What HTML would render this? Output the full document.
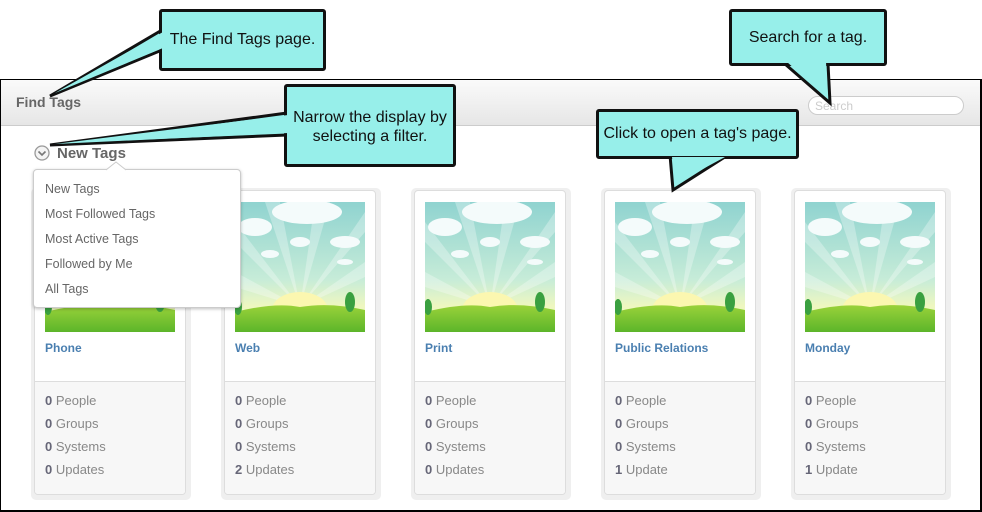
<!DOCTYPE html>
<html><head><meta charset="utf-8"><style>
body{margin:0;width:982px;height:511px;background:#fff;position:relative;overflow:hidden;font-family:"Liberation Sans",Arial,sans-serif}
.frame{position:absolute;left:0;top:79px;width:979px;height:430px;border:1px solid #000;border-right-width:2px;border-bottom-width:2px}
.hdr{position:absolute;left:0;top:0;right:0;height:45px;background:linear-gradient(#fafafa,#e6e6e6);border-bottom:1px solid #ccc}
.hdr b{position:absolute;left:15px;top:14px;font-size:14px;color:#666}
.search{position:absolute;left:807px;top:16px;width:156px;height:19px;border:1px solid #ccc;border-radius:10px;background:#fff;font-size:12px;color:#ccc;line-height:18px;padding-left:6px;box-sizing:border-box}
.card{position:absolute;top:188px;width:160px;height:312px;background:#efefef;border-radius:5px}
.in{position:absolute;left:3px;top:2px;width:152px;height:305px;background:#fff;border:1px solid #ddd;border-radius:4px;overflow:hidden;box-sizing:border-box}
.in svg{position:absolute;left:10px;top:11px}
.t{position:absolute;left:10px;top:150px;font-size:12px;font-weight:bold;color:#4a7fb0}
.st{position:absolute;left:0;top:190px;width:152px;height:120px;background:#f7f7f7;border-top:1px solid #ddd}
.st div{position:absolute;left:10px;font-size:13px;color:#888}
.st b{color:#667}
.co{position:absolute;background:#97efea;border:3px solid #111;border-radius:3px;box-sizing:border-box;font-size:16px;color:#111;text-align:center}
.dd{position:absolute;left:33px;top:169px;width:206px;height:137px;background:#fff;border:1px solid #ccc;border-radius:4px;box-shadow:0 1px 3px rgba(0,0,0,.25)}
.dd div{position:absolute;left:11px;font-size:12.5px;color:#666}
</style></head><body>
<svg width="0" height="0" style="position:absolute"><defs>
<linearGradient id="sky" x1="0" y1="0" x2="0" y2="1"><stop offset="0" stop-color="#8fd3d0"/><stop offset=".6" stop-color="#c7ecd8"/><stop offset=".8" stop-color="#eef7c0"/></linearGradient>
<linearGradient id="gr" x1="0" y1="0" x2="0" y2="1"><stop offset="0" stop-color="#9ad23a"/><stop offset="1" stop-color="#5cb52a"/></linearGradient>
<symbol id="pic" viewBox="0 0 130 130">
<rect width="130" height="130" fill="url(#sky)"/>
<g fill="#fff" opacity=".3"><path d="M65 105 L0 20 L0 40Z"/><path d="M65 105 L30 0 L45 0Z"/><path d="M65 105 L80 0 L95 0Z"/><path d="M65 105 L130 10 L130 30Z"/><path d="M65 105 L0 70 L0 85Z"/><path d="M65 105 L130 60 L130 75Z"/></g>
<g fill="#f4fbfb"><ellipse cx="72" cy="10" rx="35" ry="12"/><ellipse cx="20" cy="25" rx="17" ry="9"/><ellipse cx="110" cy="40" rx="15" ry="6"/><ellipse cx="65" cy="40" rx="10" ry="5"/><ellipse cx="35" cy="52" rx="9" ry="4"/><ellipse cx="110" cy="60" rx="8" ry="3"/></g>
<ellipse cx="65" cy="108" rx="28" ry="18" fill="#fbf7b0"/>
<path d="M0 110 Q40 100 65 105 Q95 100 130 108 L130 130 L0 130Z" fill="url(#gr)"/>
<ellipse cx="115" cy="100" rx="5" ry="10" fill="#3aa040"/><ellipse cx="3" cy="105" rx="4" ry="8" fill="#3aa040"/>
</symbol></defs></svg>

<div class="frame"><div class="hdr"><b>Find Tags</b><div class="search">Search</div></div></div>

<svg style="position:absolute;left:34px;top:145px" width="16" height="16"><circle cx="8" cy="8" r="7" fill="#f4f4f4" stroke="#999" stroke-width="1.3"/><path d="M4.5 6.5 L8 10 L11.5 6.5" fill="none" stroke="#777" stroke-width="1.6"/></svg>
<div style="position:absolute;left:57px;top:145px;font-size:15px;font-weight:bold;color:#666">New Tags</div>

<div class="card" style="left:31px"><div class="in"><svg width="130" height="130"><use href="#pic"/></svg><div class="t">Phone</div><div class="st"><div style="top:11px"><b>0</b> People</div><div style="top:34px"><b>0</b> Groups</div><div style="top:57px"><b>0</b> Systems</div><div style="top:80px"><b>0</b> Updates</div></div></div></div>
<div class="card" style="left:221px"><div class="in"><svg width="130" height="130"><use href="#pic"/></svg><div class="t">Web</div><div class="st"><div style="top:11px"><b>0</b> People</div><div style="top:34px"><b>0</b> Groups</div><div style="top:57px"><b>0</b> Systems</div><div style="top:80px"><b>2</b> Updates</div></div></div></div>
<div class="card" style="left:411px"><div class="in"><svg width="130" height="130"><use href="#pic"/></svg><div class="t">Print</div><div class="st"><div style="top:11px"><b>0</b> People</div><div style="top:34px"><b>0</b> Groups</div><div style="top:57px"><b>0</b> Systems</div><div style="top:80px"><b>0</b> Updates</div></div></div></div>
<div class="card" style="left:601px"><div class="in"><svg width="130" height="130"><use href="#pic"/></svg><div class="t">Public Relations</div><div class="st"><div style="top:11px"><b>0</b> People</div><div style="top:34px"><b>0</b> Groups</div><div style="top:57px"><b>0</b> Systems</div><div style="top:80px"><b>1</b> Update</div></div></div></div>
<div class="card" style="left:791px"><div class="in"><svg width="130" height="130"><use href="#pic"/></svg><div class="t">Monday</div><div class="st"><div style="top:11px"><b>0</b> People</div><div style="top:34px"><b>0</b> Groups</div><div style="top:57px"><b>0</b> Systems</div><div style="top:80px"><b>1</b> Update</div></div></div></div>

<div class="dd"><div style="top:12px">New Tags</div><div style="top:37px">Most Followed Tags</div><div style="top:62px">Most Active Tags</div><div style="top:87px">Followed by Me</div><div style="top:112px">All Tags</div></div>
<svg style="position:absolute;left:106px;top:161px" width="20" height="10"><path d="M0 9 L10 1 L20 9" fill="#fff" stroke="#ccc"/></svg>

<svg style="position:absolute;left:0;top:0" width="982" height="511">
<g fill="#97efea" stroke="#111" stroke-width="3" stroke-linejoin="miter">
<path d="M162 30 L50 96 L162 50"/>
<path d="M287 113 L50 145 L287 135"/>
<path d="M785 64 L830 103 L828 64"/>
<path d="M670 155 L673 190 L728 155"/>
</g></svg>
<div class="co" style="left:159px;top:9px;width:167px;height:62px;line-height:56px">The Find Tags page.</div>
<div class="co" style="left:284px;top:84px;width:172px;height:83px;padding-top:21px;line-height:19px">Narrow the display by<br>selecting a filter.</div>
<div class="co" style="left:729px;top:9px;width:158px;height:57px;line-height:51px">Search for a tag.</div>
<div class="co" style="left:596px;top:109px;width:203px;height:50px;line-height:44px">Click to open a tag's page.</div>
<svg style="position:absolute;left:0;top:0" width="982" height="511">
<g fill="#97efea"><path d="M163 32 L55 93 L163 48Z"/><path d="M288 115 L55 144 L288 133Z"/><path d="M787 62 L828 98 L826 62Z"/><path d="M672 157 L675 184 L725 157Z"/></g></svg>
</body></html>
